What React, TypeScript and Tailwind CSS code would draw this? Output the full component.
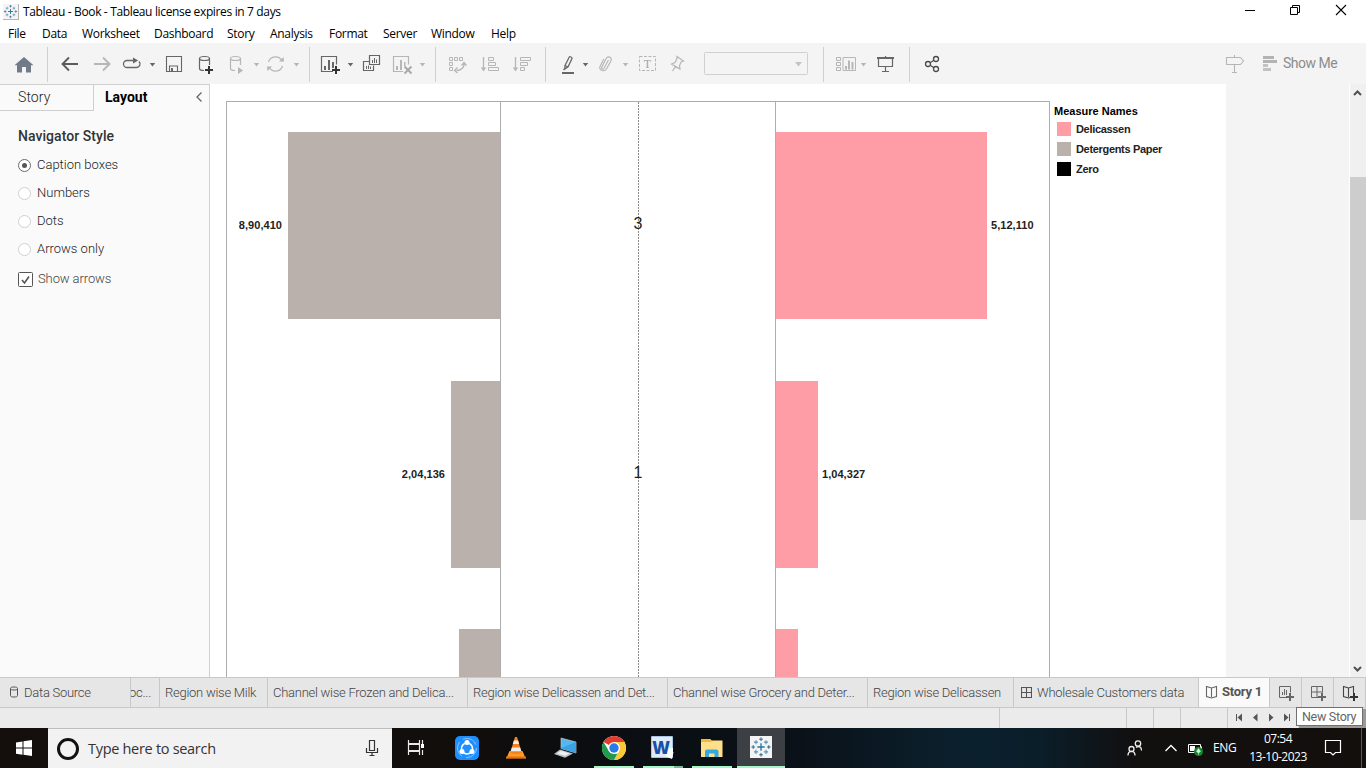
import React from "react";

const D = "#666666";
const L = "#b6b6b6";

const ui = "font-['Open_Sans','Noto_Sans',sans-serif]";
const benton = "font-['Roboto','Liberation_Sans',sans-serif]";
const arial = "font-['Liberation_Sans',Arial,sans-serif]";

/* Slot of a horizontal bar; its drawing uses the window's coordinates. */
function Slot({ x, y, w, h, children }: { x: number; y: number; w: number; h: number; children?: React.ReactNode }) {
  return (
    <svg className="block shrink-0" width={w} height={h} viewBox={`${x} ${y} ${w} ${h}`} fill="none">
      {children}
    </svg>
  );
}

function Tool({ from, to, children }: { from: number; to: number; children?: React.ReactNode }) {
  return (
    <Slot x={from} y={43} w={to - from} h={41}>
      {children}
    </Slot>
  );
}

const Caret = ({ x, c }: { x: number; c: string }) => <path d={`M${x - 2.7} 63h5.4l-2.7 3.4z`} fill={c} />;
const Sep = ({ x }: { x: number }) => <path d={`M${x + 0.5} 47V82`} stroke="#d0d0d0" />;

function TableauMark({ s = 16, c1 = "#1f7aa8", c2 = "#1f5f8a" }: { s?: number; c1?: string; c2?: string }) {
  return (
    <svg className="block shrink-0" width={s} height={s} viewBox="0 0 24 24" fill="none">
      <rect width="24" height="24" fill="#f4f4f4" />
      <path d="M12 8v8M8 12h8" stroke={c1} strokeWidth="1.5" />
      <path d="M12 1.5v4M10 3.5h4M12 18.5v4M10 20.5h4M1.5 12h4M3.5 10v4M18.500 12h4M20.5 10v4" stroke={c2} strokeWidth="1" />
      <path d="M6.500 4.500v4.500M4.300 6.700h4.500M17.500 4.500v4.500M15.200 6.700h4.500M6.500 15v4.500M4.300 17.300h4.500M17.500 15v4.500M15.200 17.300h4.500" stroke="#5b93b5" strokeWidth="1.2" />
    </svg>
  );
}

function TitleBar() {
  return (
    <div className="flex h-[24px] shrink-0 items-center bg-white">
      <div className="ml-[3px] mr-[4px] border-b border-r border-[#b5b5b5]">
        <TableauMark s={15} />
      </div>
      <span className={`${ui} text-[12px] tracking-[-0.35px] leading-[16px] text-black whitespace-nowrap`}>
        Tableau - Book - Tableau license expires in 7 days
      </span>
      <div className="ml-auto flex">
        <Slot x={1226} y={0} w={46} h={24}>
          <path d="M1245 10.500h10" stroke="#000" />
        </Slot>
        <Slot x={1272} y={0} w={46} h={24}>
          <path d="M1290.500 7.500h7v7h-7zM1292.500 7V5.500h7v7H1298" stroke="#000" />
        </Slot>
        <Slot x={1318} y={0} w={48} h={24}>
          <path d="M1336 5l10 10M1346 5l-10 10" stroke="#000" strokeWidth="1.1" />
        </Slot>
      </div>
    </div>
  );
}

const menus: [string, string][] = [
  ["File", "w-[34px]"],
  ["Data", "w-[40px]"],
  ["Worksheet", "w-[72px]"],
  ["Dashboard", "w-[73px]"],
  ["Story", "w-[43px]"],
  ["Analysis", "w-[59px]"],
  ["Format", "w-[54px]"],
  ["Server", "w-[48px]"],
  ["Window", "w-[60px]"],
  ["Help", "w-[40px]"],
];

function MenuBar() {
  return (
    <div className={`flex h-[19px] shrink-0 items-center bg-white pl-[8px] text-[12px] tracking-[-0.3px] text-black ${ui}`}>
      {menus.map(([m, w]) => (
        <span key={m} className={`${w} shrink-0 leading-[18px]`}>
          {m}
        </span>
      ))}
    </div>
  );
}

function Toolbar() {
  return (
    <div className="flex h-[41px] shrink-0 bg-[#f4f4f4]">
      <Tool from={0} to={54}>
        <path d="M24 57l9.500 8.300H31V72.500h-5V67h-4v5.500h-5v-7.200h-2.500z" fill="#717b88" />
        <Sep x={47} />
      </Tool>
      <Tool from={54} to={86}>
        <path d="M78 64H63M69 57.500L62.500 64l6.500 6.500" stroke="#5c5c5c" strokeWidth="1.900" />
      </Tool>
      <Tool from={86} to={116}>
        <path d="M94 64h15M103 57.500l6.500 6.500-6.500 6.500" stroke={L} strokeWidth="1.900" />
      </Tool>
      <Tool from={116} to={160}>
        <path d="M135 60.500h-8a3.500 3.500 0 0 0 0 7h9.500a3.500 3.500 0 0 0 2.500-6" stroke={D} strokeWidth="1.300" />
        <path d="M133 57.500l5.200 3-5.200 3z" fill={D} />
        <Caret x={152.500} c={D} />
      </Tool>
      <Tool from={160} to={190}>
        <path d="M166.500 56.500h15v15h-15zM169.500 71v-5h8v5" stroke={D} strokeWidth="1.100" />
        <path d="M171 68h2v3h-2z" fill={D} />
      </Tool>
      <Tool from={190} to={222}>
        <ellipse cx="204.500" cy="58.500" rx="5" ry="2" stroke={D} strokeWidth="1.200" />
        <path d="M199.500 58.500v10c0 1.300 2 2 4.500 2M209.500 58.500V65" stroke={D} strokeWidth="1.200" />
        <path d="M209 66v8M205 70h8" stroke="#333" strokeWidth="2" />
      </Tool>
      <Tool from={222} to={262}>
        <ellipse cx="235.500" cy="58.500" rx="5" ry="2" stroke={L} strokeWidth="1.200" />
        <path d="M230.500 58.500v10c0 1.300 2 2 4.500 2M240.500 58.500V65" stroke={L} strokeWidth="1.200" />
        <path d="M238 67l5 3.500-5 3.500z" fill={L} />
        <Caret x={256.500} c={L} />
      </Tool>
      <Tool from={262} to={316}>
        <path d="M268.500 62a7.300 7.300 0 0 1 13.500-1M282.500 66a7.300 7.300 0 0 1-13.500 1" stroke={L} strokeWidth="1.200" />
        <path d="M279 61.500h5l-.5-4.500zM272 66.500h-5l.5 4.500z" fill={L} />
        <Caret x={296.500} c={L} />
        <Sep x={309} />
      </Tool>
      <Tool from={316} to={356}>
        <path d="M333 71.500h-11.500v-15h15v8" stroke={D} strokeWidth="1.200" />
        <path d="M324 66h2v4h-2zM328 60h2v10h-2zM332 62h2v6h-2z" fill={D} />
        <path d="M336 66v8M332 70h8" stroke="#333" strokeWidth="2" />
        <Caret x={350.500} c={D} />
      </Tool>
      <Tool from={356} to={386}>
        <path d="M369.500 55.500h10v9h-10zM369 61.500h-5.500v9h10v-5" stroke={D} strokeWidth="1.200" />
        <path d="M372.500 60v3M374.500 58v5M376.500 59.500v3.500M366.500 66v3M368.500 65.500v3.500M370.500 66.500v2.500" stroke={D} />
      </Tool>
      <Tool from={386} to={442}>
        <path d="M403 71.500h-9.500v-15h15v8" stroke={L} strokeWidth="1.200" />
        <path d="M396 66h2v4h-2zM400 60h2v10h-2zM404 62h1.500v4H404z" fill={L} />
        <path d="M404.500 66.500l7 7M411.500 66.500l-7 7" stroke="#a9a9a9" strokeWidth="2" />
        <Caret x={422.500} c={L} />
        <Sep x={435} />
      </Tool>
      <Tool from={442} to={474}>
        <path d="M449.500 57.500h3v3h-3zM454.500 57.500h3v3h-3zM459.500 57.500h3v3h-3zM449.500 62.500h3v3h-3zM449.500 67.500h3v3h-3z" stroke={L} />
        <path d="M464 63.500c.5 4-3 7-7.500 7M461.500 65.500l2.500-3 2.500 3M457.500 67.500l-3 3 3 2.500" stroke={L} strokeWidth="1.300" />
      </Tool>
      <Tool from={474} to={506}>
        <path d="M483.500 57v13" stroke={L} strokeWidth="1.300" />
        <path d="M480.800 67.500h5.400l-2.700 4z" fill={L} />
        <path d="M488.500 57.500h5v3h-5zM488.500 62.500h7v3h-7zM488.500 67.500h10v3h-10z" stroke={L} />
      </Tool>
      <Tool from={506} to={552}>
        <path d="M515.500 57v13" stroke={L} strokeWidth="1.300" />
        <path d="M512.800 67.500h5.400l-2.700 4z" fill={L} />
        <path d="M520.500 57.500h10v3h-10zM520.500 62.500h7v3h-7zM520.500 67.500h4v3h-4z" stroke={L} />
        <Sep x={545} />
      </Tool>
      <Tool from={552} to={592}>
        <path d="M565 65.500l4.300-8.500c.5-.8 3 .3 2.800 1.300l-4 8.500-3.300 2.200zM565 65.500l3.200 1.500M564.700 68.500l-1.200 1.700" stroke={D} strokeWidth="1.300" />
        <path d="M562 72h12v2h-12z" fill={D} />
        <Caret x={585.500} c={D} />
      </Tool>
      <Tool from={592} to={632}>
        <path d="M608.500 60l-4.500 8.200c-1 1.700-3 .7-2.300-1l4.300-8.500c1.700-3.300 6.500-1.500 5 2l-4.200 7.800c-2.500 4-8.300 2-6.800-2l3.800-7.500" stroke={L} strokeWidth="1.200" />
        <Caret x={625.500} c={L} />
      </Tool>
      <Tool from={632} to={662}>
        <path d="M639.500 56.500h16v14h-16z" stroke={L} strokeDasharray="3 1.500" />
        <text x="647.500" y="68" textAnchor="middle" fill="#a2a2a2" fontSize="12" fontFamily="Liberation Serif, serif">
          T
        </text>
      </Tool>
      <Tool from={662} to={696}>
        <path d="M677 56.500l6.500 4.500-2 .5-2 4 .5 3.500-8.500-5 3.500-1.500 2-4zM675.500 66.500l-3 4.500" stroke={L} strokeWidth="1.200" />
      </Tool>
      <Tool from={696} to={830}>
        <rect x="704.500" y="52.500" width="103" height="22" rx="1" stroke="#d0d0d0" />
        <path d="M795 62h7l-3.500 4.500z" fill="#c4c4c4" />
        <Sep x={823} />
      </Tool>
      <Tool from={830} to={870}>
        <path d="M836.500 57.500h4v3h-4zM836.500 62.500h4v3h-4zM836.500 67.500h4v3h-4zM843 57.500h12.500v13H843z" stroke={L} />
        <path d="M845 66h2v3.500h-2zM848 60.500h2v9h-2zM851.500 62h2v7.500h-2z" fill={L} />
        <Caret x={863.500} c={L} />
      </Tool>
      <Tool from={870} to={916}>
        <path d="M877 57h17v2h-17z" fill={D} />
        <path d="M885.500 56v2M878.500 58v8.500h14V58M885.500 66.500v5M882 71.500h7" stroke={D} strokeWidth="1.200" />
        <Sep x={909} />
      </Tool>
      <Tool from={916} to={1216}>
        <path d="M930.500 62.500l3.500-2.300M930.500 65.500l3.500 2.300" stroke="#4a4a4a" strokeWidth="1.200" />
        <g stroke="#4a4a4a" strokeWidth="1.300">
          <circle cx="928" cy="64" r="2.500" />
          <circle cx="936" cy="59" r="2.500" />
          <circle cx="936" cy="69" r="2.500" />
        </g>
      </Tool>
      <Tool from={1216} to={1256}>
        <path d="M1226.500 57.500h14l3 3.500-3 3.500h-14zM1234.500 55v2.500M1234.500 64.500v8M1232 72.500h5" stroke={L} strokeWidth="1.100" />
      </Tool>
      <Tool from={1256} to={1283}>
        <path d="M1263 56h11v3h-11zM1263 60h14v3h-14z" fill="#b3b3b3" />
        <path d="M1263 64h5v3h-5zM1263 68h8v3h-8z" fill="#c2c2c2" />
      </Tool>
      <span className={`${benton} pt-[10px] text-[14px] leading-[20px] tracking-[-0.5px] text-[#8c8c8c]`}>Show Me</span>
    </div>
  );
}

function Radio({ label, on }: { label: string; on?: boolean }) {
  return (
    <div className="flex h-[28px] items-center">
      <div className={`mr-[6px] flex h-[13px] w-[13px] items-center justify-center rounded-full border bg-white ${on ? "border-[#6a6a6a]" : "border-[#d0d0d0]"}`}>
        {on && <div className="h-[5px] w-[5px] rounded-full bg-[#555]" />}
      </div>
      <span>{label}</span>
    </div>
  );
}

function SidePanel() {
  return (
    <div className={`${benton} flex w-[210px] shrink-0 flex-col border-r border-t border-[#cfcfcf] bg-[#fafafa] text-[#222]`}>
      <div className="flex h-[26px] shrink-0 text-[14px] leading-[25px]">
        <div className="w-[94px] border-b border-r border-[#cfcfcf] pl-[18px] font-light tracking-[0.1px]">Story</div>
        <div className="pl-[11px] font-bold text-black">Layout</div>
        <svg className="ml-auto mr-[6px] mt-[6px]" width="8" height="12" fill="none">
          <path d="M6.500 1.500L2 6l4.500 4.500" stroke="#666" strokeWidth="1.300" />
        </svg>
      </div>
      <div className="flex flex-col pl-[18px] pt-[15px] text-[13px] font-light">
        <div className="h-[25px] text-[14px] font-medium leading-[20px] tracking-[0.05px] text-[#333]">Navigator Style</div>
        <Radio label="Caption boxes" on />
        <Radio label="Numbers" />
        <Radio label="Dots" />
        <Radio label="Arrows only" />
        <div className="mt-[2px] flex h-[28px] items-center text-[#444]">
          <svg className="mr-[5px]" width="15" height="15" fill="none">
            <rect x=".5" y=".5" width="14" height="14" rx="1" fill="#fff" stroke="#555" />
            <path d="M4 8l2.500 3L11 4.500" stroke="#555" strokeWidth="1.600" />
          </svg>
          <span className="tracking-[-0.1px]">Show arrows</span>
        </div>
      </div>
    </div>
  );
}

function Bar({ side, size, label }: { side: "l" | "r"; size: string; label?: string }) {
  return (
    <div className={`flex items-center ${side === "l" ? "flex-row-reverse" : ""} ${label ? "h-[187px]" : "h-[48px]"} shrink-0`}>
      <div className={`h-full ${size} ${side === "l" ? "bg-[#bab0ac]" : "bg-[#ff9da7]"}`} />
      <span className={side === "l" ? "mr-[6px]" : "ml-[4px]"}>{label}</span>
    </div>
  );
}

function Chart() {
  return (
    <div className={`${arial} mt-[17px] flex w-[824px] shrink-0 border-l border-t border-[#adadad] text-[11px] font-bold tracking-[0.05px] text-[#222]`}>
      <div className="flex w-[274px] flex-col overflow-hidden border-r border-[#adadad] pt-[30px]">
        <Bar side="l" size="w-[212px]" label="8,90,410" />
        <div className="h-[62px] shrink-0" />
        <Bar side="l" size="w-[49px]" label="2,04,136" />
        <div className="h-[61px] shrink-0" />
        <Bar side="l" size="w-[41px]" />
      </div>
      <div className="relative flex w-[275px] flex-col items-center border-r border-[#adadad] text-[16px] font-normal leading-[186px]">
        <svg className="absolute left-[137px] top-0 h-full w-px">
          <path d="M.5 0V600" stroke="#8a8a8a" strokeDasharray="2 1" />
        </svg>
        <span className="relative mt-[29px] h-[187px]">3</span>
        <span className="relative mt-[62px] h-[187px]">1</span>
      </div>
      <div className="flex w-[274px] flex-col overflow-hidden border-r border-[#adadad] pt-[30px]">
        <Bar side="r" size="w-[211px]" label="5,12,110" />
        <div className="h-[62px] shrink-0" />
        <Bar side="r" size="w-[42px]" label="1,04,327" />
        <div className="h-[61px] shrink-0" />
        <Bar side="r" size="w-[22px]" />
      </div>
    </div>
  );
}

function Legend() {
  return (
    <div className={`${arial} ml-[4px] flex flex-col pt-[20px] text-[11px] font-bold leading-[14px] text-black`}>
      <div className="h-[18px]">Measure Names</div>
      <div className="flex flex-col gap-[6px] pl-[3px] tracking-[-0.32px] text-[#222]">
        <div className="flex gap-[5px]"><i className="h-[14px] w-[14px] bg-[#ff9da7]" />Delicassen</div>
        <div className="flex gap-[5px]"><i className="h-[14px] w-[14px] bg-[#bab0ac]" />Detergents Paper</div>
        <div className="flex gap-[5px]"><i className="h-[14px] w-[14px] bg-black" />Zero</div>
      </div>
    </div>
  );
}

function Scrollbar() {
  return (
    <div className="flex w-[17px] shrink-0 flex-col border-l border-white bg-[#f0f0f0]">
      <svg width="16" height="93" fill="none">
        <path d="M4 11l3.500-3.500L11 11" stroke="#505050" strokeWidth="2" />
      </svg>
      <div className="h-[343px] bg-[#cdcdcd]" />
      <svg className="mt-auto" width="16" height="17" fill="none">
        <path d="M4 7l3.500 3.500L11 7" stroke="#505050" strokeWidth="2" />
      </svg>
    </div>
  );
}

const sheets: [string, string][] = [
  ["Region wise Milk", "w-[108px]"],
  ["Channel wise Frozen and Delica...", "w-[200px]"],
  ["Region wise Delicassen and Det...", "w-[200px]"],
  ["Channel wise Grocery and Deter...", "w-[200px]"],
  ["Region wise Delicassen", "w-[146px]"],
];

const BookIcon = ({ x, c }: { x: number; c: string }) => (
  <path d={`M${x + 5.5} 688v9M${x + 5.5} 688l-5-1.500v10l5 1.500 5-1.500v-10z`} stroke={c} strokeWidth="1.100" />
);

function SheetTabs() {
  const tab = "flex shrink-0 items-center border-r border-[#c8c8c8] whitespace-nowrap overflow-hidden";
  return (
    <div className={`${benton} flex h-[31px] shrink-0 border-y border-[#c8c8c8] bg-[#e6e6e6] text-[13px] font-light tracking-[-0.26px] text-[#444]`}>
      <div className={`${tab} w-[131px] pl-[8px]`}>
        <svg className="mr-[4px]" width="12" height="14" fill="none">
          <path d="M2.500 3v6.500c0 1 1 1.500 3.500 1.500s3.500-.5 3.500-1.500V3M2.500 2.500c0-1 1-1.500 3.500-1.500S9.500 1.500 9.500 2.500 8.500 4 6 4 2.500 3.500 2.500 2.500z" stroke="#555" />
        </svg>
        Data Source
      </div>
      <div className={`${tab} w-[29px] justify-end pr-[8px]`}>oc...</div>
      {sheets.map(([s, w]) => (
        <div key={s} className={`${tab} ${w} pl-[5px]`}>{s}</div>
      ))}
      <div className={`${tab} w-[185px] pl-[7px]`}>
        <svg className="mr-[5px]" width="11" height="12" fill="none">
          <path d="M.5 .5h10v10H.5zM5.500 .5v10M.5 5.500h10" stroke="#555" strokeWidth="1.100" />
        </svg>
        Wholesale Customers data
      </div>
      <div className={`${tab} w-[71px] bg-[#fafafa] pb-px font-bold text-[#555]`}>
        <Slot x={1199} y={678} w={23} h={29}>
          <BookIcon x={1206} c="#666" />
        </Slot>
        Story 1
      </div>
      <div className={`${tab} w-[32px]`}>
        <Slot x={1270} y={678} w={31} h={29}>
          <path d="M1288 697.500h-8.500v-11h11v6" stroke={D} />
          <path d="M1282.500 692v3M1284.500 689v6M1286.500 690v5" stroke={D} />
          <path d="M1290 693v8M1286 697h8" stroke={D} strokeWidth="2" />
        </Slot>
      </div>
      <div className={`${tab} w-[32px]`}>
        <Slot x={1302} y={678} w={31} h={29}>
          <path d="M1319 697.500h-7.500v-11h11v6M1317 686.500v11M1311.500 692h11" stroke={D} />
          <path d="M1322 693v8M1318 697h8" stroke={D} strokeWidth="2" />
        </Slot>
      </div>
      <div className={`${tab} w-[32px]`}>
        <Slot x={1334} y={678} w={31} h={29}>
          <BookIcon x={1343} c="#444" />
          <path d="M1354 693v8M1350 697h8" stroke="#e6e6e6" strokeWidth="4" />
          <path d="M1354 693v8M1350 697h8" stroke="#333" strokeWidth="2" />
        </Slot>
      </div>
    </div>
  );
}

function StatusBar() {
  return (
    <div className="relative flex h-[20px] shrink-0 bg-[#ebebeb]">
      <div className="w-[1000px] border-r border-[#c8c8c8]" />
      <div className="w-[127px] border-r border-[#c8c8c8]" />
      <div className="w-[27px] border-r border-[#c8c8c8]" />
      <div className="w-[27px] border-r border-[#c8c8c8]" />
      <div className="w-[47px] border-r border-[#c8c8c8]" />
      <Slot x={1228} y={708} w={70} h={20}>
        <g fill="#555">
          <path d="M1236 714h1v7h-1zM1242 713.500v8l-4.500-4zM1257.500 713.500v8l-4.500-4zM1269 713.500v8l4.500-4zM1284 713.500v8l4.500-4zM1289 714h1v7h-1z" />
        </g>
      </Slot>
      <div className={`${benton} absolute left-[1296px] top-[-1px] z-10 h-[19px] w-[67px] whitespace-nowrap border border-[#707070] bg-white pl-[5px] text-[12.5px] leading-[18px] tracking-[-0.3px] text-[#666] shadow-[3px_2px_1px_rgba(0,0,0,0.35)]`}>
        New Story
      </div>
    </div>
  );
}

function Taskbar() {
  return (
    <div className={`${ui} flex h-[40px] shrink-0 bg-[linear-gradient(90deg,#140f0c_0%,#120e0b_32%,#0b0d10_43%,#0a1118_58%,#0b202d_70%,#0a1e2a_76%,#120f10_83%,#130f0d_100%)]`}>
      <Slot x={0} y={728} w={48} h={40}>
        <path d="M16 742.400l6.500-1v6.100H16zM23.500 741.300l8.500-1.300v7.500h-8.500zM16 748.500h6.500v6.200l-6.500-1zM23.500 748.500h8.500v7.500l-8.500-1.200z" fill="#fff" />
      </Slot>
      <div className="flex w-[344px] shrink-0 items-center border-t border-[#bdbdbd] bg-[#f2f2f2]">
        <div className="ml-[9px] h-[22px] w-[22px] rounded-full border-[3px] border-[#111]" />
        <span className="ml-[9px] text-[14.500px] tracking-[-0.300px] text-[#333]">Type here to search</span>
        <svg className="ml-auto mr-[13px] mt-[-2px]" width="14" height="18" fill="none">
          <path d="M4.500 1.500h5v10h-5zM1.500 9v4.500h11V9M7 13.500v3.500M4.500 16.500h5" stroke="#333" strokeWidth="1.200" />
        </svg>
      </div>
      <Slot x={392} y={728} w={52} h={40}>
        <path d="M408.500 740v3.500h11V740M408.500 755v-3.500h11v3.500M408.500 744.500h11v6h-11zM422.500 740v4M422.500 750v5" stroke="#e8e8e8" strokeWidth="1.200" />
        <path d="M421 744h3v4h-3z" fill="#fff" />
      </Slot>
      <Slot x={444} y={728} w={48} h={40}>
        <rect x="455" y="736" width="24" height="24" rx="5" fill="#1f8fff" />
        <circle cx="467" cy="748" r="9.500" stroke="#9fd0ff" strokeWidth=".8" strokeDasharray="16 4" />
        <circle cx="467" cy="748.500" r="5.500" stroke="#fff" strokeWidth="1.500" />
        <circle cx="467" cy="742.500" r="2.500" fill="#fff" />
        <circle cx="462" cy="751.500" r="2.500" fill="#fff" />
        <circle cx="472" cy="751.500" r="2.500" fill="#fff" />
      </Slot>
      <Slot x={492} y={728} w={48} h={40}>
        <path d="M509.500 751h13l3 7h-19z" fill="#ff9a2c" />
        <path d="M506 756.500h20v2.200h-20z" fill="#e27408" />
        <path d="M515 737h2l4.700 15.500c-2.500 2-9 2-11.400 0z" fill="#f5821f" />
        <path d="M513.900 740.500h4.200l1.100 3.500h-6.400zM511.900 747.500h8.200l1.200 3.800h-10.600z" fill="#eee" />
      </Slot>
      <Slot x={540} y={728} w={48} h={40}>
        <path d="M561 738l15 4v11l-15-4.500z" fill="#54b7f0" stroke="#b8c4cc" strokeWidth=".7" />
        <path d="M561 748l15-6v11l-15-4.500z" fill="#3ba3e4" />
        <path d="M554 754l6-4.500 13 4-8 4.300z" fill="#b9c1c7" />
        <path d="M557 753.500l4-2.700 8.500 2.600-4.500 2.400z" fill="#eef1f3" />
      </Slot>
      <Slot x={588} y={728} w={50} h={40}>
        <circle cx="614" cy="748" r="12" fill="#fff" />
        <path d="M614 748L603.600 742A12 12 0 0 1 624.400 742z" fill="#e33b2e" />
        <path d="M614 742h10.400a12 12 0 0 1-10.400 18l5.200-9z" fill="#fcc934" />
        <path d="M603.600 742l5.200 9 5.200 3 3.500-.5L614 760a12 12 0 0 1-10.400-18z" fill="#1e9b4b" />
        <circle cx="614" cy="748" r="6" fill="#fff" />
        <circle cx="614" cy="748" r="4.700" fill="#2a7ae8" />
        <path d="M594 766h40v2h-40z" fill="#a4f5c8" />
      </Slot>
      <Slot x={638} y={728} w={50} h={40}>
        <rect x="651" y="736" width="22" height="22" rx="1" fill="#a9c4e8" />
        <rect x="652" y="737" width="20" height="20" fill="#e0ebf8" />
        <path d="M666 748h7v4l-7-2zM667 750l6.500 2-1.500 7-6-2.500z" fill="#fafcfe" />
        <text x="661" y="753.500" textAnchor="middle" fill="#1650a8" fontSize="17" fontWeight="900" fontFamily="Noto Sans, sans-serif">
          W
        </text>
        <path d="M643 766h31v2h-31z" fill="#a4f5c8" />
        <path d="M674 766h9v2h-9z" fill="#79b795" />
      </Slot>
      <Slot x={688} y={728} w={49} h={40}>
        <path d="M701 739h9l1.500 1.500H722.500v16.500H701z" fill="#ffe08a" />
        <path d="M701 739h9l1.500 1.500v1.500H701z" fill="#f0b93a" />
        <path d="M705 757v-5.500a2 2 0 0 1 2-2h9.500a2 2 0 0 1 2 2v5.500h-4v-3.500h-5.500v3.500z" fill="#35a8e0" />
        <path d="M692 766h40v2h-40z" fill="#a4f5c8" />
      </Slot>
      <div className="flex w-[48px] shrink-0 items-center justify-center border-b-2 border-[#a4f5c8] bg-[#3c4045]">
        <TableauMark s={22} />
      </div>
      <Slot x={785} y={728} w={370} h={40}>
        <g stroke="#eee" strokeWidth="1.300">
          <circle cx="1131.500" cy="749" r="2.500" />
          <path d="M1128 755.500c0-5.500 7-5.500 7 0" />
          <circle cx="1138" cy="743.500" r="2.700" />
          <path d="M1136 747.500c3-2 5.500-.5 5.500 3" />
        </g>
      </Slot>
      <Slot x={1155} y={728} w={58} h={40}>
        <path d="M1165.500 751l5.500-5.500 5.500 5.500" stroke="#fff" strokeWidth="1.300" />
        <path d="M1188.500 744.500h12v8h-12zM1201.500 746.500v3" stroke="#fff" />
        <path d="M1190 746h5v5h-5z" fill="#fff" />
        <circle cx="1198.500" cy="751.500" r="4.500" fill="#138a2a" />
        <path d="M1198.500 748.500l2 3-2 1.500-2-1.500zM1198.500 752v3" fill="#dff5e0" stroke="#dff5e0" strokeWidth=".5" />
      </Slot>
      <span className="w-[36px] shrink-0 text-[12px] leading-[39px] tracking-[-0.400px] text-white">ENG</span>
      <div className="flex w-[58px] shrink-0 flex-col items-center whitespace-nowrap pt-[2px] text-[12px] leading-[18px] tracking-[-0.500px] text-white">
        <span>07:54</span>
        <span>13-10-2023</span>
      </div>
      <Slot x={1307} y={728} w={59} h={40}>
        <path d="M1325.500 740.500h15v12h-5l-2.500 2.500-2.500-2.500h-5z" stroke="#fff" strokeWidth="1.200" />
        <path d="M1361.500 728v40" stroke="#5a5654" />
      </Slot>
    </div>
  );
}

export default function App() {
  return (
    <div className="flex h-[768px] w-[1366px] flex-col overflow-hidden bg-white">
      <TitleBar />
      <MenuBar />
      <Toolbar />
      <div className="flex h-[593px] shrink-0 overflow-hidden">
        <SidePanel />
        <div className="flex w-[1016px] shrink-0 overflow-hidden bg-white pl-[16px]">
          <Chart />
          <Legend />
        </div>
        <div className="grow bg-[#f4f4f4]" />
        <Scrollbar />
      </div>
      <SheetTabs />
      <StatusBar />
      <Taskbar />
    </div>
  );
}
